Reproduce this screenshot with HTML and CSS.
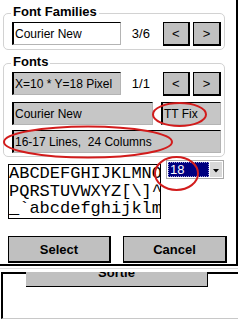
FILE: index.html
```html
<!DOCTYPE html>
<html lang="en">
<head>
  <meta charset="UTF-8">
  <title>Font</title>
  <link rel="stylesheet" href="styles.css">
</head>
<body>
  <div class="dialog">
    <div class="group">
      <div class="group-title">Font Families</div>
      <div class="row">
        <div class="field field-white w-short">Courier New</div>
        <div class="counter">3/6</div>
        <button class="btn-small">&lt;</button>
        <button class="btn-small">&gt;</button>
      </div>
    </div>

    <div class="group">
      <div class="group-title">Fonts</div>
      <div class="row">
        <div class="field w-short">X=10 * Y=18 Pixel</div>
        <div class="counter">1/1</div>
        <button class="btn-small">&lt;</button>
        <button class="btn-small">&gt;</button>
      </div>
      <div class="row row-name">
        <div class="field w-name">Courier New</div>
        <div class="field w-type">TT Fix</div>
      </div>
      <div class="row row-lines">
        <div class="field w-full">16-17 Lines,  24 Columns</div>
      </div>
    </div>

    <div class="sample-row">
      <div class="sample">ABCDEFGHIJKLMNO
PQRSTUVWXYZ[\]^
_`abcdefghijklm</div>
      <div class="combo">
        <span class="combo-value">18</span>
        <span class="combo-arrow">
          <svg width="12" height="15" viewBox="0 0 12 15"><polygon points="3,7 9,7 6,10.5" fill="#000"/></svg>
        </span>
      </div>
    </div>

    <div class="actions">
      <button class="btn">Select</button>
      <button class="btn btn-wide">Cancel</button>
    </div>
  </div>
  <div class="dialog-edge"></div>

  <div class="behind">
    <div class="sortie"><span>Sortie</span></div>
  </div>

  <!-- red hand marks over the screenshot -->
  <svg class="marks" width="240" height="320" viewBox="0 0 240 320">
    <ellipse cx="179.5" cy="114.5" rx="26.5" ry="11.5"/>
    <ellipse cx="88" cy="142" rx="84" ry="15.5"/>
    <ellipse cx="176.5" cy="173.5" rx="21.5" ry="16.5"/>
  </svg>
</body>
</html>
```

FILE: styles.css
```css
body {
  margin: 0;
  width: 240px;
  height: 320px;
  overflow: hidden;
  position: relative;
  background: #fff;
  color: #000;
  font-family: "Liberation Sans", Arial, sans-serif;
  font-size: 12px;
}

.dialog {
  position: relative;
  z-index: 1;
  display: flex;
  flex-direction: column;
  align-items: flex-start;
  width: 236px;
  height: 264px;
  border-right: 2px solid #000;
  border-bottom: 2px solid #000;
  background: #fff;
}

.group {
  margin: 13px 0 0 3px;
  width: 220px;
  padding-bottom: 3px;
  border: 1px solid #d2d2d2;
  border-radius: 5px;
}

.group-title {
  width: fit-content;
  margin: -10px 0 0 7px;
  padding: 0 2px;
  background: #fff;
  font-size: 13px;
  font-weight: bold;
  line-height: 15px;
}

.row {
  display: flex;
  align-items: flex-start;
  height: 24px;
  margin-top: 3px;
  padding-left: 8px;
}

.row-name {
  height: 23px;
  margin-top: 6px;
}

.row-lines {
  height: 23px;
  margin-top: 5px;
}

.field {
  box-sizing: border-box;
  display: flex;
  align-items: center;
  height: 23px;
  padding-left: 1px;
  border-style: solid;
  border-width: 1px 1px 1px 2px;
  border-color: #000 #b4b4b4 #b4b4b4 #000;
  background: #c6c6c6;
  white-space: pre;
  overflow: hidden;
}

.field-white {
  background: #fff;
}

.w-short { width: 110px; }
.w-name { width: 141px; }
.w-type { width: 60px; margin-left: 8px; }
.w-full { width: 209px; }

.counter {
  width: 31px;
  padding-left: 11px;
  font-size: 13px;
  line-height: 23px;
}

.btn-small {
  box-sizing: border-box;
  width: 28px;
  height: 24px;
  margin-right: 3px;
  padding: 0;
  background: #c0c0c0;
  border: 1px solid #000;
  border-right-width: 2px;
  border-bottom-width: 2px;
  font-family: "Liberation Sans", Arial, sans-serif;
  font-size: 13px;
  color: #000;
}

.sample-row {
  display: flex;
  align-items: flex-start;
  margin-top: 3px;
}

.sample {
  box-sizing: border-box;
  width: 153px;
  height: 55px;
  margin: 4px 0 0 8px;
  border: 1px solid #000;
  overflow: hidden;
  white-space: pre;
  font-family: "Liberation Mono", "Courier New", monospace;
  font-size: 17px;
  line-height: 17.5px;
}

.combo {
  display: flex;
  gap: 1px;
  margin-left: 5px;
  padding: 1px;
  border: 1px solid #a8a8a8;
  background: #fff;
}

.combo-value {
  box-sizing: border-box;
  width: 41px;
  height: 15px;
  padding-left: 1px;
  border: 1px dotted #a0a0d8;
  background: #000080;
  color: #fff;
  font-size: 13px;
  line-height: 13px;
}

.combo-arrow {
  display: flex;
  width: 12px;
  height: 15px;
  background: #d8d8d8;
}

.actions {
  display: flex;
  gap: 12px;
  margin: 17px 0 0 8px;
}

.btn {
  box-sizing: border-box;
  width: 103px;
  height: 27px;
  padding: 0;
  background: #c0c0c0;
  border: 1px solid #000;
  border-right-width: 2px;
  border-bottom-width: 2px;
  font-family: "Liberation Sans", Arial, sans-serif;
  font-size: 13px;
  font-weight: bold;
  color: #000;
}

.btn-wide {
  width: 104px;
}

.dialog-edge {
  width: 238px;
  height: 2px;
  margin-bottom: 3px;
  border-bottom: 1px solid #dadada;
}

.behind {
  box-sizing: border-box;
  width: 237px;
  height: 47px;
  margin-left: 1px;
  border-top: 2px solid #000;
  border-left: 2px solid #000;
  border-bottom: 1px solid #c8c8c8;
}

.sortie {
  width: 181px;
  height: 14px;
  margin: -2px 0 0 23px;
  overflow: hidden;
  background: #c0c0c0;
  border-right: 1px solid #000;
  border-bottom: 1px solid #000;
  text-align: center;
  font-size: 13px;
  font-weight: bold;
}

.sortie span {
  display: block;
  margin-top: -7px;
  line-height: 15px;
}

.marks {
  position: absolute;
  left: 0;
  top: 0;
  z-index: 2;
  pointer-events: none;
}

.marks ellipse {
  fill: none;
  stroke: #d21c1c;
  stroke-width: 2;
}
```
